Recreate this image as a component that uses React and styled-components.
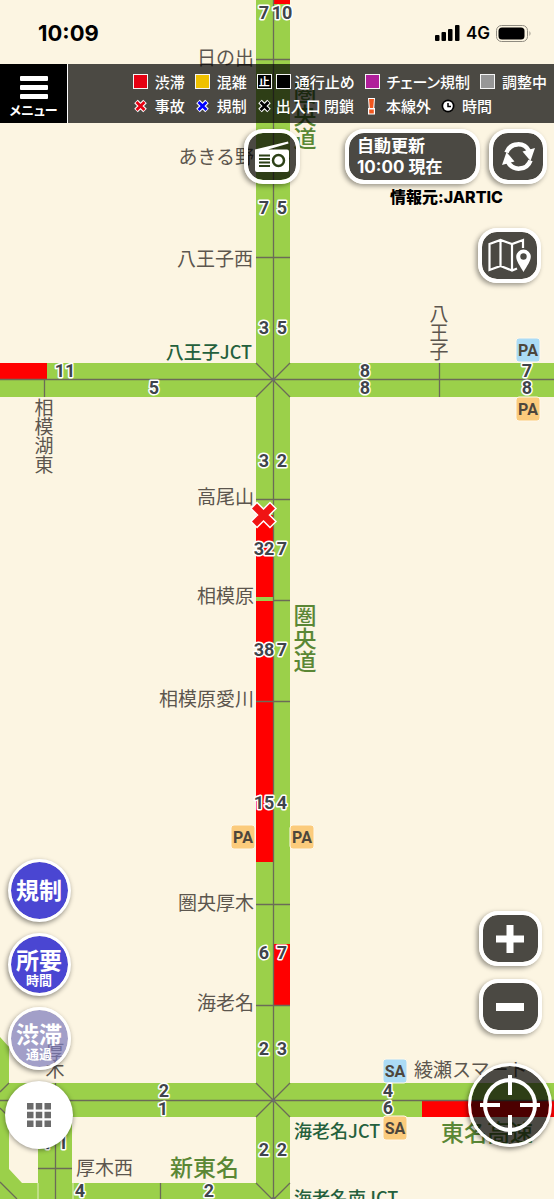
import { useState } from "react";
import styled, { createGlobalStyle } from "styled-components";

const GlobalStyle = createGlobalStyle`
  * {
    box-sizing: border-box;
  }
  body {
    margin: 0;
    background: #fcf5e2;
    font-family: Inter, "Noto Sans CJK JP", sans-serif;
  }
  button {
    font-family: inherit;
    padding: 0;
    cursor: pointer;
  }
`;

const Screen = styled.div`
  position: relative;
  min-height: 100vh;
  overflow: hidden;
  display: flex;
  flex-direction: column;
`;

/* ---------- map ---------- */

const MapSvg = styled.svg`
  position: absolute;
  inset: 0;
  width: 100%;
  height: 100%;
`;
const PlaceText = styled.text`
  font-family: "Noto Sans CJK JP", sans-serif;
  font-size: ${({ $size }) => $size || 19}px;
  font-weight: ${({ $weight }) => $weight || 400};
  fill: ${({ $color }) => $color || "#5c564e"};
`;
const NumberText = styled.text`
  font-family: Roboto, sans-serif;
  font-size: 18px;
  font-weight: 700;
  text-anchor: middle;
  fill: #3f444b;
  stroke: #ffffff;
  stroke-width: 3px;
  stroke-linejoin: round;
  paint-order: stroke;
`;
const BadgeText = styled.text`
  font-family: Roboto, sans-serif;
  font-size: 16px;
  font-weight: 700;
  text-anchor: middle;
  fill: #4d463c;
`;

const ROAD = "#9bd04a";
const JAM = "#ff0000";
const JCT = "#24603c";
const ROUTE = "#5a8735";

const places = [
  { text: "日の出", x: 254, y: 58 },
  { text: "あきる野", x: 254, y: 157 },
  { text: "八王子西", x: 253, y: 259 },
  { text: "高尾山", x: 254, y: 497 },
  { text: "相模原", x: 254, y: 596 },
  { text: "相模原愛川", x: 254, y: 699 },
  { text: "圏央厚木", x: 254, y: 903 },
  { text: "海老名", x: 254, y: 1003 },
  { text: "八王子JCT", x: 252, y: 352, color: JCT, size: 18, weight: 500 },
  { text: "海老名JCT", x: 294, y: 1131, anchor: "start", color: JCT, size: 18, weight: 500 },
  { text: "海老名南JCT", x: 294, y: 1198, anchor: "start", color: JCT, size: 18, weight: 500 },
  { text: "厚木西", x: 76, y: 1168, anchor: "start" },
  { text: "綾瀬スマート", x: 414, y: 1070, anchor: "start" },
  { text: "新東名", x: 170, y: 1167, anchor: "start", color: ROUTE, size: 23, weight: 500 },
  { text: "東名高速", x: 441, y: 1132, anchor: "start", color: ROUTE, size: 23, weight: 500 },
];

const columns = [
  { text: "相模湖東", x: 44, y: 408, step: 19 },
  { text: "八王子", x: 439, y: 314, step: 19 },
  { text: "厚木", x: 55, y: 1052, step: 18 },
  { text: "圏央道", x: 305, y: 92, step: 23, color: ROUTE, size: 23, weight: 500 },
  { text: "圏央道", x: 305, y: 615, step: 23, color: ROUTE, size: 23, weight: 500 },
];

const numbers = [
  [7, 264, 13], [10, 282, 13],
  [7, 264, 208], [5, 282, 208],
  [3, 264, 328], [5, 282, 328],
  [11, 65, 371], [5, 154, 388],
  [8, 365, 371], [8, 365, 388],
  [7, 527, 371], [8, 527, 388],
  [3, 264, 461], [2, 282, 461],
  [32, 264, 549], [7, 282, 549],
  [38, 264, 650], [7, 282, 650],
  [15, 264, 803], [4, 282, 803],
  [6, 264, 953], [7, 282, 953],
  [2, 264, 1049], [3, 282, 1049],
  [2, 164, 1091], [1, 163, 1109],
  [4, 388, 1091], [6, 388, 1108],
  [2, 264, 1150], [2, 282, 1150],
  [1, 47, 1143], [1, 63, 1143],
  [4, 80, 1191], [2, 209, 1191],
];

const badges = [
  { text: "PA", x: 528, y: 350, color: "#abdbf5" },
  { text: "PA", x: 528, y: 409, color: "#fbcb7c" },
  { text: "PA", x: 243, y: 837, color: "#fbcb7c" },
  { text: "PA", x: 302, y: 837, color: "#fbcb7c" },
  { text: "SA", x: 395, y: 1071, color: "#abdbf5" },
  { text: "SA", x: 395, y: 1128, color: "#fbcb7c" },
];

const baseline = (centre, size) => centre + (size > 20 ? 9 : 7);

function RoadMap() {
  return (
    <MapSvg viewBox="0 0 554 1199" preserveAspectRatio="xMidYMin slice" aria-label="高速道路マップ">
      <rect width="554" height="1199" fill="#fcf5e2" />

      {/* roads */}
      <g fill={ROAD}>
        <rect x="0" y="363" width="554" height="34" />
        <rect x="0" y="1083" width="554" height="34" />
        <rect x="256" y="0" width="34" height="1199" />
        <path d="M0 1037L9 1047V1169L22 1183H256V1199H0Z" />
        <rect x="38" y="1117" width="34" height="82" />
      </g>
      <path d="M38 1183V1199M73 1183V1199" stroke="#e4eebf" />

      {/* congestion */}
      <g fill={JAM}>
        <rect x="0" y="363" width="47" height="17" />
        <rect x="273" y="0" width="17" height="4" />
        <rect x="256" y="515" width="17" height="82" />
        <rect x="256" y="601" width="17" height="261" />
        <rect x="273" y="944" width="17" height="61" />
        <rect x="422" y="1100" width="132" height="17" />
      </g>

      {/* centre lines, interchanges and junctions */}
      <g stroke="#6b6b57" strokeWidth="1.3" fill="none">
        <path d="M273.5 0V1199M0 379.5H554M0 1100.5H554" />
        <path d="M256 59.5H290M256 158.5H290M256 257.5H290M256 499.5H290M273 600.5H290M256 701.5H290M256 904.5H290M256 1005.5H290" />
        <path d="M44.5 380V397M439.5 363V397M55.5 1083V1199M38 1168.5H72M160.5 1183V1199" />
        <path d="M256 363L290 397M290 363L256 397M256 1083L290 1117M290 1083L256 1117M256 1183L273 1200L290 1183" />
        <path d="M9 1083L0 1092M0 1108L9 1117M0 1182L17 1199" />
      </g>
      <g fill="#6b6b6b">
        <circle cx="273.5" cy="379.5" r="2" />
        <circle cx="273.5" cy="1100.5" r="2" />
        <circle cx="273.5" cy="1199" r="2" />
      </g>

      {places.map((p) => (
        <PlaceText
          key={p.text}
          x={p.x}
          y={baseline(p.y, p.size)}
          textAnchor={p.anchor || "end"}
          $color={p.color}
          $size={p.size}
          $weight={p.weight}
        >
          {p.text}
        </PlaceText>
      ))}
      {columns.map((c) =>
        [...c.text].map((char, i) => (
          <PlaceText
            key={`${c.y}-${i}`}
            x={c.x}
            y={baseline(c.y + i * c.step, c.size)}
            textAnchor="middle"
            $color={c.color}
            $size={c.size}
            $weight={c.weight}
          >
            {char}
          </PlaceText>
        ))
      )}
      {badges.map((b) => (
        <g key={`${b.x}-${b.y}`}>
          <rect x={b.x - 12} y={b.y - 12} width="24" height="24" rx="3" fill={b.color} stroke="#fff8ea" />
          <BadgeText x={b.x} y={b.y + 6}>{b.text}</BadgeText>
        </g>
      ))}

      {/* accident */}
      <path d="M253.5 505L273.5 525M273.5 505L253.5 525" stroke="#ffffff" strokeWidth="10" />
      <path d="M254.5 506L272.5 524M272.5 506L254.5 524" stroke="#f01414" strokeWidth="7" />

      {numbers.map(([value, x, y]) => (
        <NumberText key={`${x}-${y}`} x={x} y={y + 6}>{value}</NumberText>
      ))}
    </MapSvg>
  );
}

/* ---------- status bar and legend ---------- */

const StatusBar = styled.div`
  position: relative;
  height: 64px;
  padding: 2px 22px 0 38px;
  display: flex;
  align-items: center;
  justify-content: space-between;
  color: #000000;
`;
const Clock = styled.div`
  font-size: 22px;
  font-weight: 700;
`;
const StatusIcons = styled.div`
  display: flex;
  align-items: center;
  gap: 6px;
  font-size: 17px;
  font-weight: 600;
`;
const Header = styled.header`
  position: relative;
  height: 59px;
  display: flex;
  background: rgba(0, 0, 0, 0.7);
  font-family: "Noto Sans CJK JP", sans-serif;
`;
const MenuButton = styled.button`
  width: 68px;
  border: 0;
  border-right: 1px solid #ffffff;
  background: #000000;
  color: #ffffff;
  display: flex;
  flex-direction: column;
  align-items: center;
  justify-content: center;
  gap: 4px;
  padding-top: 5px;
  font-size: 13px;
  font-weight: 700;
  line-height: 14px;
  && {
    font-family: "Noto Sans CJK JP", sans-serif;
    font-feature-settings: "palt";
  }
`;
const Legend = styled.div`
  flex: 1;
  display: flex;
  flex-direction: column;
  align-items: flex-end;
  justify-content: center;
  padding-right: 7px;
`;
const LegendRows = styled.div`
  display: flex;
  flex-direction: column;
`;
const LegendRow = styled.ul`
  margin: 0;
  padding: 0;
  list-style: none;
  display: flex;
  gap: 10px;
  height: 24px;
`;
const LegendItem = styled.li`
  display: flex;
  align-items: center;
  gap: ${({ $tight }) => ($tight ? 4 : 7)}px;
  color: #ffffff;
  font-size: 15px;
  font-weight: 500;
  line-height: 24px;
  white-space: nowrap;
  font-feature-settings: "palt";
`;
const Swatch = styled.span`
  width: 15px;
  height: 15px;
  border: 1px solid #f5f5f5;
  background: ${({ $color }) => $color};
  color: #ffffff;
  font-size: 11px;
  font-weight: 700;
  line-height: 13px;
  text-align: center;
`;

function CrossMark({ color }) {
  return (
    <svg width="15" height="14" viewBox="0 0 15 14" aria-hidden="true">
      <path d="M3 2.5L12 11.5M12 2.5L3 11.5" stroke="#fff" strokeWidth="5" />
      <path d="M3.5 3L11.5 11M11.5 3L3.5 11" stroke={color} strokeWidth="2.8" />
    </svg>
  );
}

function ExclamationMark() {
  return (
    <svg width="15" height="18" viewBox="0 0 15 18" aria-hidden="true">
      <path d="M4 1H11L10.300 11H11V17.500H4V11H4.700Z" fill="#fff" />
      <path d="M5 2H10L9.200 11H5.800ZM5.200 12.500H9.800V16.500H5.200Z" fill="#f2561d" />
    </svg>
  );
}

function ClockMark() {
  return (
    <svg width="14" height="14" viewBox="0 0 14 14" aria-hidden="true">
      <circle cx="7" cy="7" r="6.5" fill="#000" />
      <circle cx="7" cy="7" r="4.8" fill="#fff" />
      <path d="M7 4V7.5H10" fill="none" stroke="#000" strokeWidth="1.5" />
    </svg>
  );
}

/* ---------- controls over the map ---------- */

const Controls = styled.main`
  position: relative;
  flex: 1;
  display: flex;
  flex-direction: column;
  padding-top: 6px;
`;
const TopRow = styled.div`
  display: flex;
  justify-content: flex-end;
  gap: 9px;
  padding-right: 7px;
`;
const BoxButton = styled.button`
  width: ${({ $width }) => $width || 63}px;
  height: 55px;
  margin-right: ${({ $space }) => $space || 0}px;
  border: 4px solid #ffffff;
  border-radius: 19px;
  background: rgba(0, 0, 0, 0.7);
  background-clip: padding-box;
  box-shadow: -2px 2px 5px rgba(0, 0, 0, 0.4);
  display: flex;
  align-items: center;
  justify-content: center;
`;
const UpdateButton = styled(BoxButton)`
  justify-content: flex-start;
  padding-left: 8px;
  color: #ffffff;
  font-size: 17px;
  font-weight: 700;
  line-height: 21px;
  text-align: left;
  white-space: nowrap;
`;
const Source = styled.div`
  padding-right: 51px;
  text-align: right;
  font-size: 16px;
  font-weight: 800;
  line-height: 26px;
  color: #000000;
`;
const MapRow = styled.div`
  display: flex;
  justify-content: flex-end;
  padding: 18px 13px 0 0;
`;
const BottomRow = styled.div`
  margin-top: auto;
  display: flex;
  align-items: flex-end;
  justify-content: space-between;
  padding: 0 2px 50px 5px;
`;
const LeftColumn = styled.div`
  display: flex;
  flex-direction: column;
  align-items: center;
  gap: 11px;
`;
const RightColumn = styled.div`
  display: flex;
  flex-direction: column;
  align-items: center;
  gap: 29px;
  padding-bottom: 2px;
`;
const ZoomButtons = styled.div`
  display: flex;
  flex-direction: column;
  gap: 13px;
`;
const RoundButton = styled.button`
  width: 63px;
  height: 63px;
  padding-top: ${({ $double }) => ($double ? 8 : 0)}px;
  border: 3px solid #ffffff;
  border-radius: 50%;
  background: ${({ $off }) => ($off ? "rgba(124, 123, 189, 0.7)" : "#4a46d2")};
  background-clip: padding-box;
  box-shadow: -1px 2px 5px rgba(0, 0, 0, 0.45);
  color: #ffffff;
  display: flex;
  flex-direction: column;
  align-items: center;
  justify-content: center;
  font-size: 23px;
  font-weight: 700;
  line-height: 24px;
`;
const Small = styled.span`
  font-size: 13px;
  line-height: 15px;
`;
const GridButton = styled.button`
  width: 68px;
  height: 68px;
  border: 0;
  border-radius: 50%;
  background: #ffffff;
  box-shadow: 0 1px 5px rgba(0, 0, 0, 0.45);
  display: flex;
  align-items: center;
  justify-content: center;
`;
const TargetButton = styled.button`
  width: 84px;
  height: 84px;
  border: 3px solid #ffffff;
  border-radius: 50%;
  background: rgba(0, 0, 0, 0.7);
  background-clip: padding-box;
  box-shadow: -1px 2px 5px rgba(0, 0, 0, 0.5);
  display: flex;
  align-items: center;
  justify-content: center;
`;

function RadioIcon() {
  return (
    <svg width="34" height="32" viewBox="0 0 34 32" aria-hidden="true">
      <path d="M0 12V8.5L33 0.5L33.5 2.5L13 8.5H32Q34 8.5 34 10.5V29Q34 31 32 31H2Q0 31 0 29Z" fill="#fff" />
      <path d="M4 14.500H15M4 18H15M4 21.500H15M4 25H15" stroke="#2c4117" strokeWidth="2" />
      <circle cx="23.5" cy="19.500" r="5.500" fill="none" stroke="#2c4117" strokeWidth="2.500" />
    </svg>
  );
}

function RefreshIcon() {
  return (
    <svg width="33" height="31" viewBox="0 0 33 31" aria-hidden="true">
      <g id="arrow">
        <path d="M4.5 11.5A12.3 12.3 0 0 1 27 10" fill="none" stroke="#fff" strokeWidth="4.5" />
        <path d="M20.5 10.5L33 7L28.5 20Z" fill="#fff" />
      </g>
      <use href="#arrow" transform="rotate(180 16.5 15.5)" />
    </svg>
  );
}

function MapPinIcon() {
  return (
    <svg width="43" height="35" viewBox="0 0 43 35" aria-hidden="true">
      <path
        d="M35 10V2L24 6L12.5 2L1.5 6V32L12.5 28L24 32.5L29 30.5M12.5 2V28M24 6V32"
        fill="none"
        stroke="#fff"
        strokeWidth="2.2"
      />
      <path
        d="M35.5 11.5A7.3 7.3 0 0 0 28.2 18.8C28.2 23 32 28 35.5 34C39 28 42.8 23 42.8 18.8A7.3 7.3 0 0 0 35.5 11.5Z"
        fill="#fff"
      />
      <circle cx="35.5" cy="18.5" r="3.2" fill="#4b4a44" />
    </svg>
  );
}

function TargetIcon() {
  return (
    <svg width="60" height="60" viewBox="0 0 60 60" fill="none" stroke="#fff" strokeWidth="4" aria-hidden="true">
      <circle cx="30" cy="30" r="25" />
      <path d="M30 0V20M30 40V60M0 30H20M40 30H60" />
    </svg>
  );
}

function App() {
  const [passing, setPassing] = useState(false);

  return (
    <Screen>
      <GlobalStyle />
      <RoadMap />
      <StatusBar>
        <Clock>10:09</Clock>
        <StatusIcons>
          <svg width="25" height="16" viewBox="0 0 25 16" aria-hidden="true">
            <rect x="0" y="10" width="4.5" height="6" rx="1" />
            <rect x="6.5" y="7" width="4.5" height="9" rx="1" />
            <rect x="13" y="4" width="4.5" height="12" rx="1" />
            <rect x="20" y="0" width="4.5" height="16" rx="1" />
          </svg>
          4G
          <svg width="36" height="17" viewBox="0 0 36 17" aria-hidden="true">
            <rect x="0.5" y="0.5" width="31" height="16" rx="5" fill="none" stroke="#8f8b80" />
            <rect x="2.5" y="2.5" width="26" height="12" rx="3.5" />
            <path d="M33.5 6V11Q35.5 8.5 33.5 6Z" fill="#8f8b80" />
          </svg>
        </StatusIcons>
      </StatusBar>

      <Header>
        <MenuButton type="button">
          <svg width="28" height="23" viewBox="0 0 28 23" fill="#fff" aria-hidden="true">
            <rect y="0" width="28" height="5" rx="1" />
            <rect y="9" width="28" height="5" rx="1" />
            <rect y="18" width="28" height="5" rx="1" />
          </svg>
          メニュー
        </MenuButton>
        <Legend>
          <LegendRows>
            <LegendRow>
              <LegendItem><Swatch $color="#e60012" />渋滞</LegendItem>
              <LegendItem><Swatch $color="#efc100" />混雑</LegendItem>
              <LegendItem $tight>
                <Swatch $color="#000000">止</Swatch>
                <Swatch $color="#000000" />
                通行止め
              </LegendItem>
              <LegendItem><Swatch $color="#b01e9a" />チェーン規制</LegendItem>
              <LegendItem><Swatch $color="#979797" />調整中</LegendItem>
            </LegendRow>
            <LegendRow>
              <LegendItem><CrossMark color="#e60012" />事故</LegendItem>
              <LegendItem><CrossMark color="#0000ff" />規制</LegendItem>
              <LegendItem $tight><CrossMark color="#000000" />出入口 閉鎖</LegendItem>
              <LegendItem><ExclamationMark />本線外</LegendItem>
              <LegendItem><ClockMark />時間</LegendItem>
            </LegendRow>
          </LegendRows>
        </Legend>
      </Header>

      <Controls>
        <TopRow>
          <BoxButton type="button" aria-label="ラジオ" $width={56} $space={36}>
            <RadioIcon />
          </BoxButton>
          <UpdateButton type="button" $width={135}>
            自動更新
            <br />
            10:00 現在
          </UpdateButton>
          <BoxButton type="button" aria-label="更新" $width={58}>
            <RefreshIcon />
          </BoxButton>
        </TopRow>
        <Source>情報元:JARTIC</Source>
        <MapRow>
          <BoxButton type="button" aria-label="地図">
            <MapPinIcon />
          </BoxButton>
        </MapRow>
        <BottomRow>
          <LeftColumn>
            <RoundButton type="button">規制</RoundButton>
            <RoundButton type="button" $double>
              所要
              <Small>時間</Small>
            </RoundButton>
            <RoundButton
              type="button"
              $double
              $off={!passing}
              aria-pressed={passing}
              onClick={() => setPassing(!passing)}
            >
              渋滞
              <Small>通過</Small>
            </RoundButton>
            <GridButton type="button" aria-label="一覧">
              <svg width="24" height="24" viewBox="0 0 24 24" aria-hidden="true">
                <path
                  d="M3.25 0V24M12 0V24M20.75 0V24"
                  stroke="#6b6b6b"
                  strokeWidth="6.5"
                  strokeDasharray="6.5 2.25"
                />
              </svg>
            </GridButton>
          </LeftColumn>
          <RightColumn>
            <ZoomButtons>
              <BoxButton type="button" aria-label="拡大">
                <svg width="28" height="28" viewBox="0 0 28 28" aria-hidden="true">
                  <path d="M0 14H28M14 0V28" stroke="#fff" strokeWidth="7" />
                </svg>
              </BoxButton>
              <BoxButton type="button" aria-label="縮小">
                <svg width="28" height="28" viewBox="0 0 28 28" aria-hidden="true">
                  <path d="M0 14H28" stroke="#fff" strokeWidth="8" />
                </svg>
              </BoxButton>
            </ZoomButtons>
            <TargetButton type="button" aria-label="現在地">
              <TargetIcon />
            </TargetButton>
          </RightColumn>
        </BottomRow>
      </Controls>
    </Screen>
  );
}

export default App;
